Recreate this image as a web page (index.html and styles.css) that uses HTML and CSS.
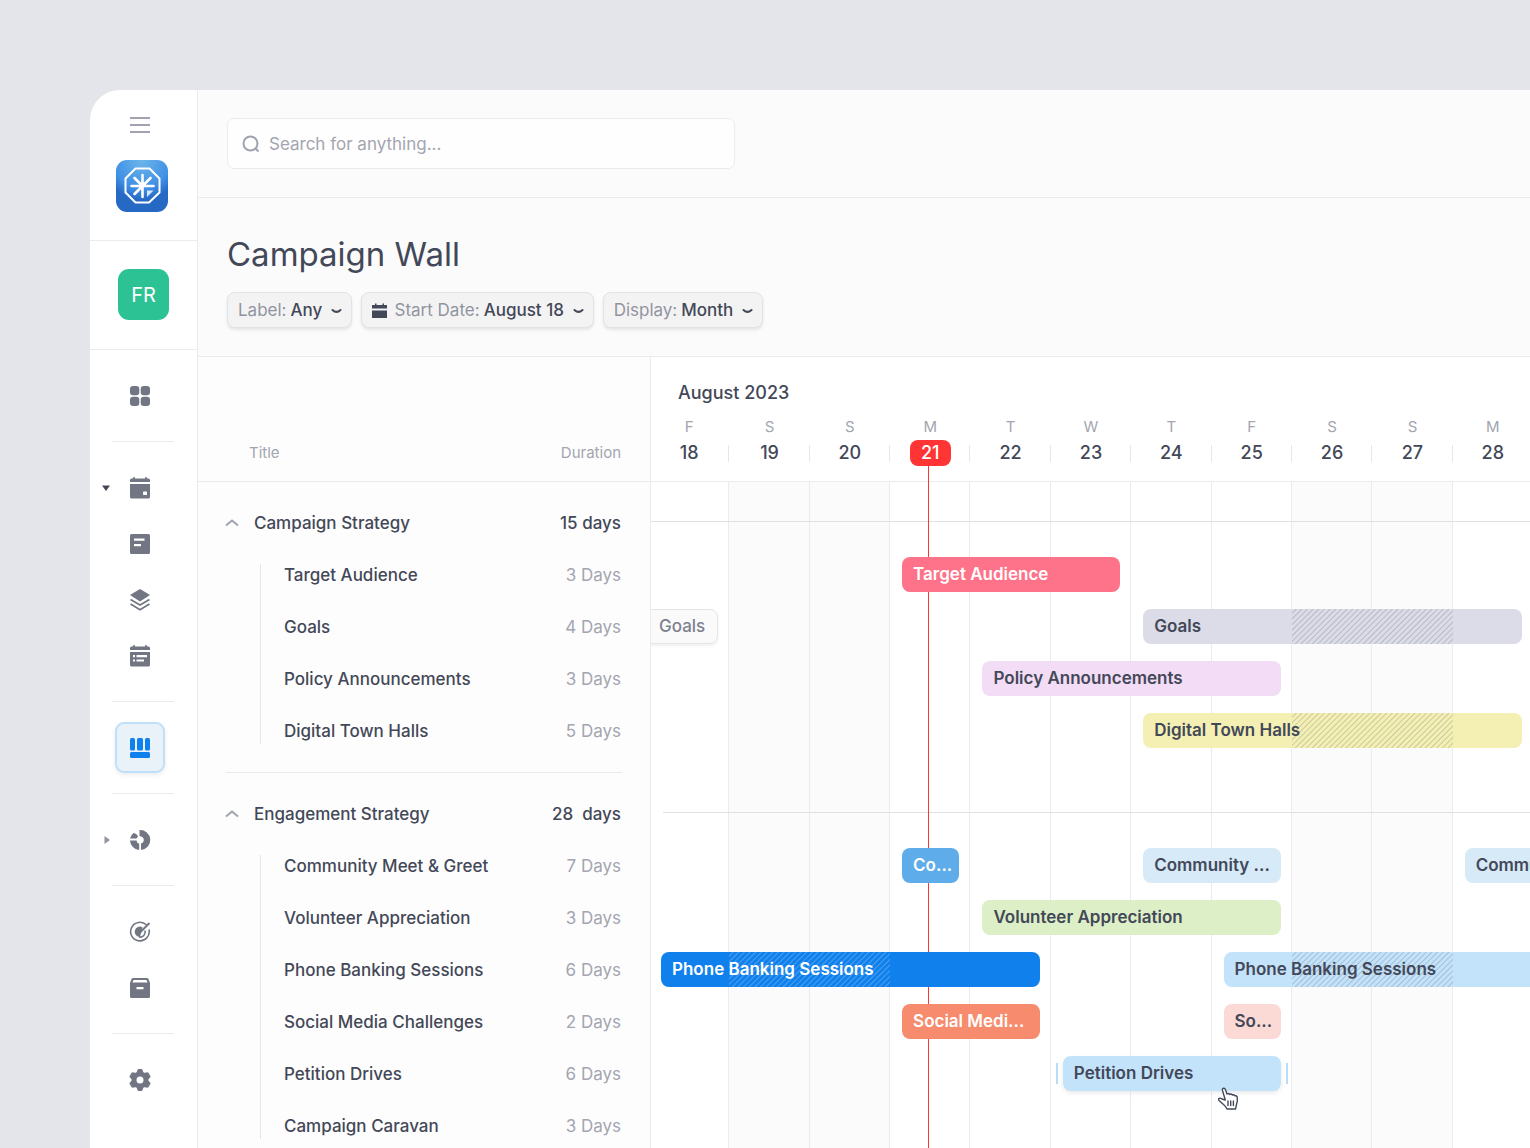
FILE: index.html
```
<!DOCTYPE html>
<html lang="en">

<head>
    <meta charset="utf-8">
    <title>Campaign Wall</title>
    <meta name="viewport" content="width=device-width, initial-scale=1">
    <link rel="stylesheet" href="styles.css">
</head>

<body>
    <div class="app">
        <aside class="sidebar">
            <div class="brand">
                <button class="menu-button" aria-label="Menu">
                    <svg width="22" height="18" viewBox="0 0 22 18" fill="none" stroke="#a0a3af" stroke-width="2"><path d="M1 2h20M1 9h20M1 16h20"/></svg>
                </button>
                <a class="logo" href="#" aria-label="Home">
                    <svg width="52" height="52" viewBox="0 0 52 52" fill="none" stroke="#fff">
                        <path stroke-width="2" stroke-linejoin="round" d="M19.500 8.500h14L43.500 18.500v14L33 42.500H19.500L9.500 32.500v-14z"/>
                        <path stroke-width="2.600" stroke-linecap="round" d="M26.500 15v22M15.500 26h22M18.500 34L34.500 18M26.500 26l-8-8"/>
                        <path fill="#d5e8fb" stroke="none" d="M31 30.500h6.500L31 37z"/>
                    </svg>
                </a>
            </div>
            <div class="account">
                <button class="avatar">FR</button>
            </div>
            <nav class="nav">
                <div class="nav-row">
                    <a class="nav-item" href="#" aria-label="Dashboard">
                        <svg width="22" height="22" viewBox="0 0 22 22"><rect x="1" y="1" width="9.300" height="9.300" rx="3"/><rect x="11.700" y="1" width="9.300" height="9.300" rx="3"/><rect x="1" y="11.700" width="9.300" height="9.300" rx="3"/><rect x="11.700" y="11.700" width="9.300" height="9.300" rx="3"/></svg>
                    </a>
                </div>
                <hr>
                <div class="nav-row">
                    <svg class="arrow open" width="8" height="6" viewBox="0 0 8 6"><path d="M0 .5h8L4 6z"/></svg>
                    <a class="nav-item" href="#" aria-label="Calendar">
                        <svg width="22" height="22" viewBox="0 0 22 22"><path d="M1 5V3q0-1.500 1.500-1.500H4V.5q1-.8 2 0v1h10v-1q1-.8 2 0v1h1.500Q21 1.500 21 3v2z"/><path fill-rule="evenodd" d="M1 7h20v13q0 1.500-1.500 1.500h-17Q1 21.500 1 20zM15 14.500h2.500q.5 0 .5.5v2.500q0 .5-.5.5H15q-1 0-1-.5V15q0-.5 1-.5z"/></svg>
                    </a>
                </div>
                <div class="nav-row">
                    <a class="nav-item" href="#" aria-label="Notes">
                        <svg width="22" height="22" viewBox="0 0 22 22"><path fill-rule="evenodd" d="M2.500 1h17Q21 1 21 2.500v17q0 1.500-1.500 1.500h-17Q1 21 1 19.500v-17Q1 1 2.500 1zM5 5.500v2.200h10.500V5.500zM5 11v2.200h7V11z"/></svg>
                    </a>
                </div>
                <div class="nav-row">
                    <a class="nav-item" href="#" aria-label="Layers">
                        <svg width="22" height="22" viewBox="0 0 22 22"><path d="M11 0l10 6-10 6.500L1 6z"/><path fill="none" stroke="#717682" stroke-width="1.700" d="M1.500 10.500L11 16l9.500-5.500M1.500 15L11 20.700 20.500 15"/></svg>
                    </a>
                </div>
                <div class="nav-row">
                    <a class="nav-item" href="#" aria-label="Schedule">
                        <svg width="22" height="22" viewBox="0 0 22 22"><path d="M1 5V3q0-1.500 1.500-1.500H4V.5q1-.8 2 0v1h10v-1q1-.8 2 0v1h1.500Q21 1.500 21 3v2z"/><path fill-rule="evenodd" d="M1 7h20v13q0 1.500-1.500 1.500h-17Q1 21.500 1 20zM4 10v2.200h2V10zM7.500 10v2.200H18V10zM4 14.500v2h2v-2zM7.500 14.500v2H15v-2z"/></svg>
                    </a>
                </div>
                <hr>
                <div class="nav-row">
                    <a class="nav-item active" href="#" aria-label="Campaign wall" aria-current="page">
                        <svg width="22" height="22" viewBox="0 0 22 22"><rect x="1" y="1" width="5" height="12.500" rx="1.500"/><rect x="8" y="1" width="6" height="12.500" rx="1.500"/><rect x="16" y="1" width="5" height="12.500" rx="1.500"/><rect x="1" y="15" width="20" height="6" rx="1.500"/></svg>
                    </a>
                </div>
                <hr>
                <div class="nav-row">
                    <svg class="arrow" width="6" height="8" viewBox="0 0 6 8"><path d="M.5 0v8L6 4z"/></svg>
                    <a class="nav-item" href="#" aria-label="Reports">
                        <svg width="22" height="22" viewBox="0 0 22 22"><path d="M10.500 1A10 10 0 0 1 12 21v-6.500a3.600 3.600 0 0 0 0-7L10.500 7z"/><path d="M1 9.500A10 10 0 0 1 4.500 4q3.500.5 4.500 3.500L7.500 9.500zM1 11.500h6.500a3.300 3.300 0 0 0 2.700 3V21a10 10 0 0 1-9.200-9.500z"/></svg>
                    </a>
                </div>
                <hr>
                <div class="nav-row">
                    <a class="nav-item" href="#" aria-label="Goals">
                        <svg width="22" height="22" viewBox="0 0 22 22" fill="none" stroke="#717682" stroke-width="1.600"><path d="M17.500 4A9.300 9.300 0 1 0 20 8.500"/><path d="M13.500 6.300A5.200 5.200 0 1 0 11 16z" fill="#717682" stroke="none"/><path d="M16 9.500A5.200 5.200 0 0 1 10 16"/><path d="M11 11.500L20.500 2" stroke-width="2"/></svg>
                    </a>
                </div>
                <div class="nav-row">
                    <a class="nav-item" href="#" aria-label="Archive">
                        <svg width="22" height="22" viewBox="0 0 22 22"><path fill-rule="evenodd" d="M4 1h14q1 0 1.500 1L21 6v13.500q0 1.500-1.500 1.500h-17Q1 21 1 19.500V6l1.500-4Q3 1 4 1zM4.500 3L3.500 5.500h15L17.500 3zM7.500 10v2.200h7V10z"/></svg>
                    </a>
                </div>
                <hr>
                <div class="nav-row">
                    <a class="nav-item" href="#" aria-label="Settings">
                        <svg width="24" height="24" viewBox="0 0 24 24"><path fill-rule="evenodd" stroke="#717682" stroke-width="2" stroke-linejoin="round" d="M10.500 2h3l1 2.800 2 1.100 3-.6 2 3.200-2 2.300v2.400l2 2.300-2 3.200-3-.6-2 1.100-1 2.800h-3l-1-2.800-2-1.100-3 .6-2-3.200 2-2.300v-2.400l-2-2.300 2-3.200 3 .6 2-1.100zM12 7.500a4.500 4.500 0 1 0 0 9 4.500 4.500 0 0 0 0-9z"/></svg>
                    </a>
                </div>
            </nav>
        </aside>

        <main class="main">
            <header class="topbar">
                <label class="search">
                    <svg width="18" height="18" viewBox="0 0 18 18" fill="none" stroke="#a0a3af" stroke-width="2"><circle cx="8.500" cy="8.500" r="7"/><path d="M13 13l3.500 3.500"/></svg>
                    <input type="text" placeholder="Search for anything..." aria-label="Search">
                </label>
            </header>

            <section class="heading">
                <h1>Campaign Wall</h1>
                <div class="filters">
                    <div class="filter">
                        <label for="filter-label">Label:</label>
                        <select id="filter-label">
                            <option>Any</option>
                        </select>
                        <svg class="chevron" width="11" height="7" viewBox="0 0 11 7"><path d="M1.500 2q4 3.800 8 0"/></svg>
                    </div>
                    <div class="filter">
                        <svg class="date-icon" width="15" height="15" viewBox="0 0 15 15"><path d="M0 5.500V2h3V.5h1.500V2h6V.5H12V2h3v3.500zM0 7.500h15V15H0z"/></svg>
                        <label for="filter-date">Start Date:</label>
                        <select id="filter-date">
                            <option>August 18</option>
                        </select>
                        <svg class="chevron" width="11" height="7" viewBox="0 0 11 7"><path d="M1.500 2q4 3.800 8 0"/></svg>
                    </div>
                    <div class="filter">
                        <label for="filter-display">Display:</label>
                        <select id="filter-display">
                            <option>Month</option>
                            <option>Week</option>
                            <option>Day</option>
                        </select>
                        <svg class="chevron" width="11" height="7" viewBox="0 0 11 7"><path d="M1.500 2q4 3.800 8 0"/></svg>
                    </div>
                </div>
            </section>

            <section class="board">
                <table class="tasks">
                    <colgroup>
                        <col class="col-toggle">
                        <col>
                        <col class="col-duration">
                    </colgroup>
                    <thead>
                        <tr>
                            <th colspan="2">Title</th>
                            <th class="duration">Duration</th>
                        </tr>
                    </thead>
                    <tbody class="group-head">
                        <tr>
                            <td class="toggle"><button aria-label="Collapse Campaign Strategy"><svg width="14" height="9" viewBox="0 0 14 9"><path d="M1 7.500l6-5 6 5"/></svg></button></td>
                            <td>Campaign Strategy</td>
                            <td class="duration">15 days</td>
                        </tr>
                    </tbody>
                    <tbody class="group-rows">
                        <tr><td></td><td>Target Audience</td><td class="duration">3 Days</td></tr>
                        <tr><td></td><td>Goals</td><td class="duration">4 Days</td></tr>
                        <tr><td></td><td>Policy Announcements</td><td class="duration">3 Days</td></tr>
                        <tr><td></td><td>Digital Town Halls</td><td class="duration">5 Days</td></tr>
                    </tbody>
                    <tbody class="divider">
                        <tr><td colspan="3"><hr></td></tr>
                    </tbody>
                    <tbody class="group-head">
                        <tr>
                            <td class="toggle"><button aria-label="Collapse Engagement Strategy"><svg width="14" height="9" viewBox="0 0 14 9"><path d="M1 7.500l6-5 6 5"/></svg></button></td>
                            <td>Engagement Strategy</td>
                            <td class="duration">28&nbsp; days</td>
                        </tr>
                    </tbody>
                    <tbody class="group-rows">
                        <tr><td></td><td>Community Meet &amp; Greet</td><td class="duration">7 Days</td></tr>
                        <tr><td></td><td>Volunteer Appreciation</td><td class="duration">3 Days</td></tr>
                        <tr><td></td><td>Phone Banking Sessions</td><td class="duration">6 Days</td></tr>
                        <tr><td></td><td>Social Media Challenges</td><td class="duration">2 Days</td></tr>
                        <tr><td></td><td>Petition Drives</td><td class="duration">6 Days</td></tr>
                        <tr><td></td><td>Campaign Caravan</td><td class="duration">3 Days</td></tr>
                    </tbody>
                </table>

                <div class="timeline">
                    <div class="timeline-head">
                        <div class="month">August 2023</div>
                        <div class="days">
                            <div class="day"><span>F</span><b>18</b></div>
                            <div class="day"><span>S</span><b>19</b></div>
                            <div class="day"><span>S</span><b>20</b></div>
                            <div class="day today"><span>M</span><b><i>21</i></b></div>
                            <div class="day"><span>T</span><b>22</b></div>
                            <div class="day"><span>W</span><b>23</b></div>
                            <div class="day"><span>T</span><b>24</b></div>
                            <div class="day"><span>F</span><b>25</b></div>
                            <div class="day"><span>S</span><b>26</b></div>
                            <div class="day"><span>S</span><b>27</b></div>
                            <div class="day"><span>M</span><b>28</b></div>
                        </div>
                    </div>
                    <div class="timeline-body">
                        <div class="columns">
                            <div></div>
                            <div class="weekend"></div>
                            <div class="weekend"></div>
                            <div></div>
                            <div></div>
                            <div></div>
                            <div></div>
                            <div></div>
                            <div class="weekend"></div>
                            <div class="weekend"></div>
                            <div></div>
                        </div>

                        <div class="lanes">
                            <div class="lane-head"><hr></div>
                            <div class="lane">
                                <div class="bar pink" style="grid-column: 4 / 7">Target Audience</div>
                            </div>
                            <div class="lane">
                                <div class="bar past" style="grid-column: 1 / 2">Goals</div>
                                <div class="bar grey" style="grid-column: 7 / 12">Goals</div>
                                <div class="hatch" style="grid-column: 9 / 11"></div>
                            </div>
                            <div class="lane">
                                <div class="bar violet" style="grid-column: 5 / 9">Policy Announcements</div>
                            </div>
                            <div class="lane">
                                <div class="bar yellow" style="grid-column: 7 / 12">Digital Town Halls</div>
                                <div class="hatch" style="grid-column: 9 / 11"></div>
                            </div>
                        </div>

                        <div class="lanes">
                            <div class="lane-head inset"><hr></div>
                            <div class="lane">
                                <div class="bar sky" style="grid-column: 4 / 5">Co...</div>
                                <div class="bar pale" style="grid-column: 7 / 9">Community ...</div>
                                <div class="bar pale continues" style="grid-column: 11 / 12">Community ...</div>
                            </div>
                            <div class="lane">
                                <div class="bar green" style="grid-column: 5 / 9">Volunteer Appreciation</div>
                            </div>
                            <div class="lane">
                                <div class="bar blue" style="grid-column: 1 / 6">Phone Banking Sessions</div>
                                <div class="hatch light" style="grid-column: 2 / 4"></div>
                                <div class="bar lightblue continues" style="grid-column: 8 / 12">Phone Banking Sessions</div>
                                <div class="hatch" style="grid-column: 9 / 11"></div>
                            </div>
                            <div class="lane">
                                <div class="bar coral" style="grid-column: 4 / 6">Social Medi...</div>
                                <div class="bar rose" style="grid-column: 8 / 9">So...</div>
                            </div>
                            <div class="lane">
                                <div class="bar lightblue selected" style="grid-column: 6 / 9">
                                    Petition Drives
                                    <svg class="pointer" width="22" height="24" viewBox="0 0 22 24" fill="#fff" stroke="#434858" stroke-width="1.400" stroke-linejoin="round" stroke-linecap="round"><path d="M8.300 13L5.500 3.500Q5 1.500 6.500 1.200 8 1 8.500 2.800L10 7q1.500-1 2.700.5 1.500-1 2.700.5 1.500-.6 2.500.8 1.800-.5 2.300 1.200.6 4-.7 7.500L18.500 22h-8.500q-1-2.500-3.500-4.500L2 13.500q-1-1.500.3-2.200 1.200-.5 2.700.7z"/><path fill="none" d="M11 14v4.500M13.700 14v4.500M16.400 14v4.500"/></svg>
                                </div>
                            </div>
                            <div class="lane"></div>
                        </div>
                    </div>
                </div>
            </section>
        </main>
    </div>
</body>

</html>
```

FILE: styles.css
```
:root {
    --page-bg: #e4e5ea;
    --panel-bg: #fdfdfd;
    --header-bg: #fbfbfb;
    --text: #434858;
    --muted: #a3a5b0;
    --icon: #717682;
    --line: #ebebed;
    --accent: #0f80ec;
    --today: #ff3434;
}

* {
    box-sizing: border-box;
}

body {
    margin: 0;
    padding: 90px 0 0 90px;
    height: 100vh;
    overflow: hidden;
    background: var(--page-bg);
    color: var(--text);
    font-family: Inter, "Liberation Sans", sans-serif;
    font-size: 17px;
    line-height: 24px;
}

button, input, select {
    font: inherit;
    color: inherit;
    border: 0;
    background: none;
    padding: 0;
    margin: 0;
}

button {
    cursor: pointer;
}

hr {
    border: 0;
    border-top: 1px solid var(--line);
    margin: 0;
}

svg {
    display: block;
}

.app {
    display: flex;
    min-height: 100%;
    background: #fff;
    border-top-left-radius: 30px;
    overflow: hidden;
}

/* sidebar */

.sidebar {
    flex: none;
    width: 108px;
    border-right: 1px solid var(--line);
}

.brand {
    padding: 26px 0 28px 26px;
    border-bottom: 1px solid var(--line);
}

.menu-button {
    display: block;
    margin: 0 0 26px 13px;
}

.logo {
    display: block;
    width: 52px;
    height: 52px;
    border-radius: 11px;
    background: radial-gradient(circle at 50% 0, #6db6ec 0, #3f8fe4 50%, #2569c5 68%);
}

.account {
    padding: 28px 0 29px 28px;
    border-bottom: 1px solid var(--line);
}

.avatar {
    display: block;
    width: 51px;
    height: 51px;
    border-radius: 11px;
    background: #2dc294;
    color: #fff;
    font-size: 20px;
}

.nav {
    display: flex;
    flex-direction: column;
    gap: 5px;
    padding: 20px 0;
}

.nav hr {
    width: 62px;
    margin: 15px 0 15px 22px;
}

.nav-row {
    display: grid;
    grid-template-columns: 25px 50px;
    align-items: center;
}

.nav-item {
    grid-column: 2;
    display: flex;
    align-items: center;
    justify-content: center;
    height: 51px;
    border-radius: 9px;
    fill: var(--icon);
}

.nav-item.active {
    background: #e9f2f9;
    border: 2px solid #bfe0fa;
    box-shadow: 0 2px 4px rgba(67, 72, 88, .1);
    fill: var(--accent);
}

.arrow {
    justify-self: end;
    margin-right: 5px;
    fill: #9093a0;
}

.arrow.open {
    fill: var(--text);
}

/* top part */

.main {
    flex: 1;
    min-width: 0;
    background: var(--header-bg);
}

.topbar {
    padding: 28px 29px;
    border-bottom: 1px solid var(--line);
}

.search {
    display: flex;
    align-items: center;
    gap: 9px;
    width: 508px;
    max-width: 100%;
    height: 51px;
    padding: 0 14px;
    border: 1px solid var(--line);
    border-radius: 7px;
    background: #fefefe;
}

.search input {
    flex: 1;
    min-width: 0;
    outline: none;
}

.search input::placeholder {
    color: var(--muted);
    opacity: 1;
}

.heading {
    padding: 34px 29px 28px;
    border-bottom: 1px solid var(--line);
}

h1 {
    margin: 0 0 16px;
    font-size: 33px;
    line-height: 44px;
    font-weight: 400;
}

.filters {
    display: flex;
    gap: 9px;
}

.filter {
    position: relative;
    display: flex;
    align-items: center;
    gap: 4px;
    height: 36px;
    padding-left: 10px;
    border: 1px solid #e2e3e8;
    border-radius: 8px;
    background: #f3f3f4;
    box-shadow: 0 2px 3px rgba(67, 72, 88, .12);
}

.filter label {
    color: #9194a0;
}

.filter select {
    appearance: none;
    padding-right: 28px;
    font-weight: 500;
    cursor: pointer;
}

.date-icon {
    margin-right: 4px;
    fill: var(--text);
}

.chevron {
    position: absolute;
    right: 9px;
    top: 15px;
    fill: none;
    stroke: var(--text);
    stroke-width: 2;
    stroke-linecap: round;
    pointer-events: none;
}

/* board */

.board {
    display: flex;
    align-items: flex-start;
    background: #fff;
}

.tasks {
    flex: none;
    width: 453px;
    table-layout: fixed;
    border-spacing: 0;
    border-right: 1px solid var(--line);
    background: var(--panel-bg);
}

.col-toggle {
    width: 56px;
}

.col-duration {
    width: 120px;
}

.tasks td, .tasks th {
    padding: 0;
}

.tasks th {
    height: 125px;
    padding-bottom: 19px;
    vertical-align: bottom;
    text-align: left;
    border-bottom: 1px solid var(--line);
    color: var(--muted);
    font-size: 15px;
    font-weight: 400;
    line-height: 18px;
}

.tasks th:first-child {
    padding-left: 51px;
}

.tasks .duration {
    padding-right: 29px;
    text-align: right;
}

.group-head td {
    height: 67px;
    padding-top: 14px;
    font-weight: 500;
}

.toggle button {
    display: block;
    margin-left: 27px;
}

.toggle svg {
    fill: none;
    stroke: #a0a3af;
    stroke-width: 2;
}

/* the rail on the left of the tasks of a group */
.group-rows {
    background: linear-gradient(#e4e5e9, #e4e5e9) no-repeat 62px 15px / 1px calc(100% - 28px);
}

.group-rows td {
    height: 52px;
    font-weight: 500;
}

.group-rows td:nth-child(2) {
    padding-left: 30px;
}

.group-rows .duration {
    color: var(--muted);
    font-weight: 400;
}

.divider td {
    padding: 15px 28px 0;
}

/* timeline */

.timeline {
    flex: 1;
    min-width: 0;
    align-self: stretch;
    overflow: hidden;
}

.timeline-head {
    padding: 25px 0 15px;
    border-bottom: 1px solid var(--line);
}

.month {
    margin-bottom: 14px;
    padding-left: 27px;
    font-size: 18px;
    line-height: 22px;
    font-weight: 500;
}

.days, .columns, .lane {
    display: grid;
    grid-template-columns: repeat(11, minmax(0, 1fr));
    margin: 0 -3px 0 -2px;
}

.day {
    text-align: center;
}

.day span {
    display: block;
    margin-bottom: 4px;
    font-size: 15px;
    line-height: 18px;
    color: var(--muted);
}

.day b {
    display: block;
    font-size: 18px;
    font-weight: 500;
    line-height: 26px;
    background: linear-gradient(#e6e7ea, #e6e7ea) no-repeat right center / 1px 17px;
}

.today i {
    position: relative;
    display: block;
    width: 41px;
    margin: 0 auto;
    border-radius: 8px;
    background: var(--today);
    color: #fff;
    font-style: normal;
}

/* today marker runs down behind the bars */
.today i::after {
    content: "";
    position: absolute;
    z-index: 1;
    top: 100%;
    left: 18px;
    width: 1px;
    height: 100vh;
    background: var(--today);
}

.timeline-body {
    position: relative;
}

.columns {
    position: absolute;
    top: 0;
    right: 0;
    bottom: 0;
    left: 0;
}

.columns div {
    border-right: 1px solid #ebebed;
}

.columns .weekend {
    background: #fbfbfb;
}

.lanes {
    padding-bottom: 16px;
}

.lane-head {
    position: relative;
    height: 67px;
    padding-top: 39px;
}

.lane-head hr {
    border-color: #dfe0e5;
}

.lane-head.inset {
    padding-left: 12px;
}

.lane {
    height: 52px;
    padding-top: 8px;
    align-items: start;
}

.bar {
    position: relative;
    z-index: 2;
    grid-row: 1;
    height: 35px;
    margin: 0 11px 0 12px;
    padding: 0 11px;
    border-radius: 8px;
    line-height: 35px;
    font-weight: 600;
    white-space: nowrap;
}

.bar.continues {
    margin-right: 0;
    border-radius: 8px 0 0 8px;
}

.bar.past {
    margin-left: 0;
    padding: 0 9px;
    border: 1px solid #e4e5e9;
    border-radius: 0 8px 8px 0;
    background: #fafafb;
    box-shadow: 0 2px 3px rgba(67, 72, 88, .08);
    color: #7d808d;
    line-height: 33px;
    font-weight: 500;
}

.pink {
    background: #ff738a;
    color: #fff;
}

.grey {
    background: #dbdce7;
}

.violet {
    background: #f3dcf6;
}

.yellow {
    background: #f4f0b4;
}

.sky {
    background: #5facea;
    color: #fff;
}

.pale {
    background: #d6eaf8;
}

.green {
    background: #ddefc6;
}

.blue {
    background: var(--accent);
    color: #fff;
}

.lightblue {
    background: #c3e3fb;
}

.coral {
    background: #f78b6e;
    color: #fff;
}

.rose {
    background: #fbdad5;
}

.hatch {
    position: relative;
    z-index: 3;
    grid-row: 1;
    height: 35px;
    background: repeating-linear-gradient(135deg, transparent 0 2px, rgba(67, 72, 88, .24) 3px, transparent 4px);
}

.hatch.light {
    background: repeating-linear-gradient(135deg, transparent 0 2px, rgba(255, 255, 255, .25) 3px, transparent 4px);
}

.selected {
    box-shadow: 0 2px 4px rgba(67, 72, 88, .12);
}

/* drag handles */
.selected::before, .selected::after {
    content: "";
    position: absolute;
    top: 7px;
    width: 2px;
    height: 21px;
    background: #b9ddf9;
}

.selected::before {
    left: -7px;
}

.selected::after {
    right: -7px;
}

.pointer {
    position: absolute;
    right: 42px;
    top: 31px;
}
```
